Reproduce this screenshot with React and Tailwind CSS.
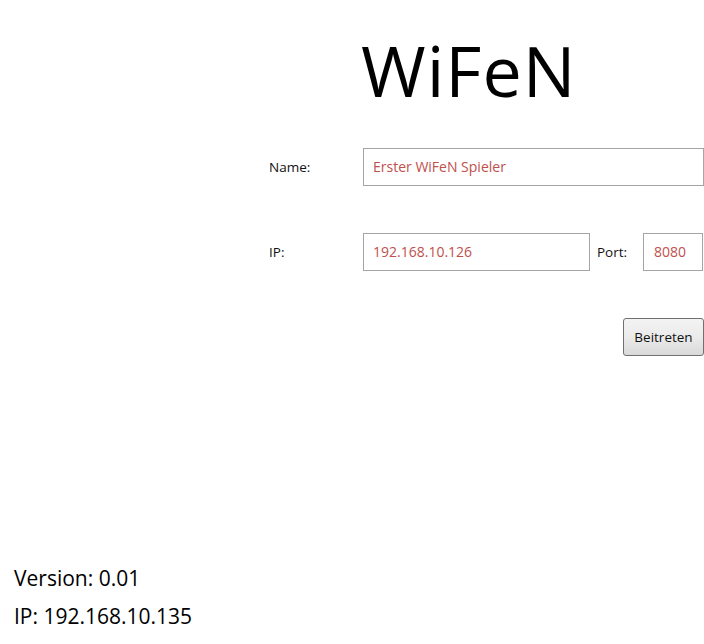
export default function App() {
  return (
    <div
      className="relative flex h-[644px] w-[704px] flex-col bg-white text-black"
      style={{ fontFamily: '"Open Sans", "Liberation Sans", sans-serif' }}
    >
      <div className="ml-[269px] w-[435px] pt-[20px]">
        <div className="grid grid-cols-[94px_1fr]">
          <div />
          <h1 className="-ml-[2px] h-[100px] text-[70px] leading-[100px] tracking-[1px] text-black">WiFeN</h1>
        </div>

        <div className="mt-[28px] grid grid-cols-[94px_1fr] items-center">
          <label className="text-[13.5px] text-[#111]">Name:</label>
          <div className="flex h-[38px] items-center border border-[#a5a5a5] px-[9px] pb-[1px] text-[14px] text-[#c0504d]">
            Erster WiFeN Spieler
          </div>
        </div>

        <div className="mt-[47px] grid grid-cols-[94px_1fr] items-center">
          <label className="text-[13.5px] text-[#111]">IP:</label>
          <div className="flex items-center">
            <div className="flex h-[38px] w-[227px] items-center border border-[#a5a5a5] px-[9px] pb-[1px] text-[14px] text-[#c0504d]">
              192.168.10.126
            </div>
            <label className="ml-[7px] w-[46px] text-[13.5px] text-[#111]">Port:</label>
            <div className="flex h-[38px] w-[60px] items-center border border-[#a5a5a5] px-[10px] pb-[1px] text-[14px] text-[#c0504d]">
              8080
            </div>
          </div>
        </div>

        <div className="mt-[47px] flex justify-end">
          <button className="h-[38px] w-[81px] rounded-[3px] border border-[#707070] bg-gradient-to-b from-[#f3f3f3] via-[#ebebeb] to-[#d9d9d9] text-[13.5px] text-[#111]">
            Beitreten
          </button>
        </div>
      </div>

      <div className="mt-auto pb-[9px] pl-[14px] text-[21px] leading-[38px] text-black">
        <div>Version: 0.01</div>
        <div>IP: 192.168.10.135</div>
      </div>
    </div>
  );
}
